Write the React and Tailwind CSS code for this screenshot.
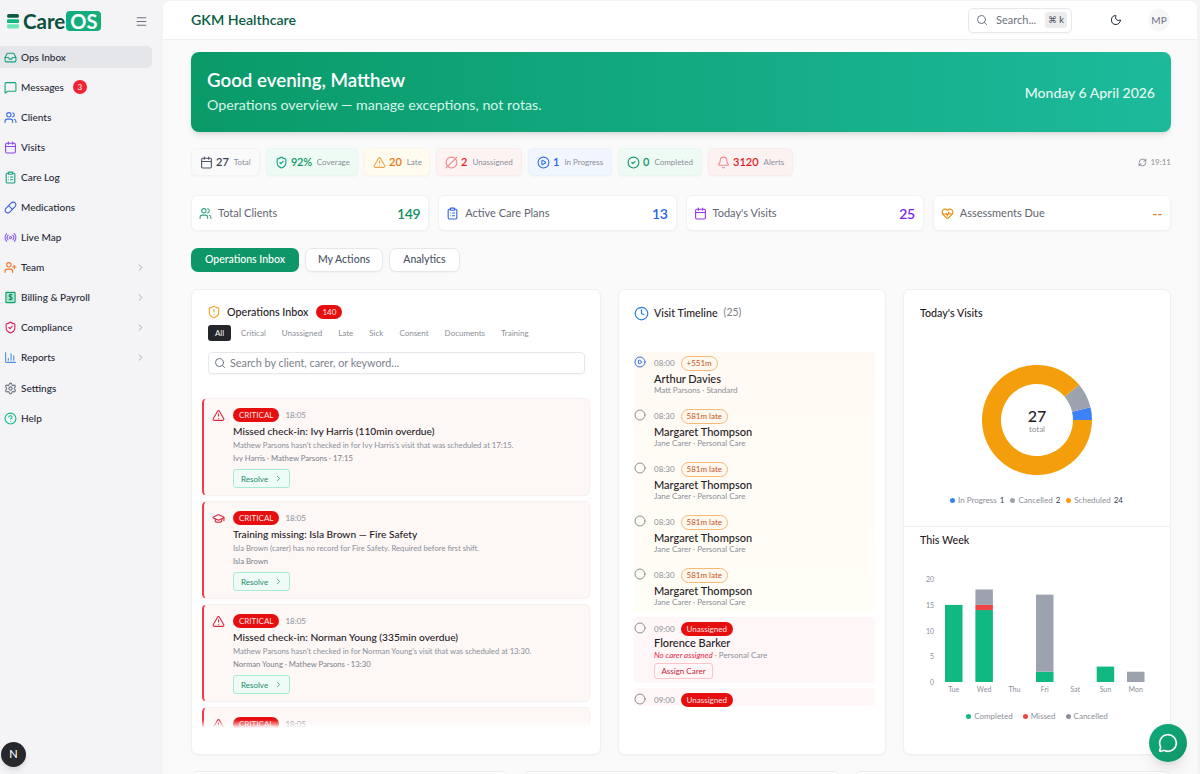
import {
  Bell, Calendar, ChartColumn, ChevronRight, Circle, CircleCheck, CircleHelp, CirclePlay, CircleSlash2, Clock,
  ClipboardList, GraduationCap, HeartPulse, Inbox, Menu, MessageCircle, MessageSquare, Moon, Pill, Radio,
  RefreshCw, Search, Settings, ShieldAlert, ShieldCheck, TriangleAlert, UserPlus, Users,
} from 'lucide-react';

const BillingIcon = ({ className }) => (
  <svg viewBox="0 0 24 24" className={className} fill="none">
    <rect x="3.5" y="2.5" width="17" height="19" rx="1" fill="#a7e3cd" stroke="currentColor" strokeWidth="2" />
    <text x="12" y="17" textAnchor="middle" fontSize="14" fontWeight="700" fill="#047857">$</text>
  </svg>
);

const navItems = [
  { label: 'Ops Inbox', icon: Inbox, color: 'text-[#10a37f]', active: true },
  { label: 'Messages', icon: MessageSquare, color: 'text-[#10a37f]', badge: '3' },
  { label: 'Clients', icon: Users, color: 'text-[#3b6fe0]' },
  { label: 'Visits', icon: Calendar, color: 'text-[#8b45e8]' },
  { label: 'Care Log', icon: ClipboardList, color: 'text-[#0f9f7c]' },
  { label: 'Medications', icon: Pill, color: 'text-[#3b5fe0]' },
  { label: 'Live Map', icon: Radio, color: 'text-[#8b5cf6]' },
  { label: 'Team', icon: UserPlus, color: 'text-[#f0762b]', arrow: true },
  { label: 'Billing & Payroll', icon: BillingIcon, color: 'text-[#0f9f6e]', arrow: true },
  { label: 'Compliance', icon: ShieldCheck, color: 'text-[#e11d58]', arrow: true },
  { label: 'Reports', icon: ChartColumn, color: 'text-[#4a90d9]', arrow: true },
  { label: 'Settings', icon: Settings, color: 'text-[#6b7280]' },
  { label: 'Help', icon: CircleHelp, color: 'text-[#10b98a]' },
];

const chips = [
  { icon: Calendar, value: '27', label: 'Total', box: 'bg-[#fafafb] border-[#f3f3f5] w-[69px]', iconColor: 'text-[#4b5563]', valueColor: 'text-[#374151]' },
  { icon: ShieldCheck, value: '92%', label: 'Coverage', box: 'bg-[#eefbf5] border-[#e8f8f0] w-[92px]', iconColor: 'text-[#0f9f7c]', valueColor: 'text-[#0f9668] tracking-tight' },
  { icon: TriangleAlert, value: '20', label: 'Late', box: 'bg-[#fffbee] border-[#fcf6e4] w-[66px]', iconColor: 'text-[#eda54a]', valueColor: 'text-[#e4780e]' },
  { icon: CircleSlash2, value: '2', label: 'Unassigned', box: 'bg-[#fef3f3] border-[#fbecec] w-[86px]', iconColor: 'text-[#ef8a8a]', valueColor: 'text-[#e11d1d]' },
  { icon: CirclePlay, value: '1', label: 'In Progress', box: 'bg-[#f1f6fe] border-[#ecf2fc] w-[84px]', iconColor: 'text-[#2f6fe8]', valueColor: 'text-[#2563eb]' },
  { icon: CircleCheck, value: '0', label: 'Completed', box: 'bg-[#eefbf5] border-[#e8f8f0] w-[84px]', iconColor: 'text-[#0f9668]', valueColor: 'text-[#0f9668]' },
  { icon: Bell, value: '3120', label: 'Alerts', box: 'bg-[#fdf2f2] border-[#faecec] w-[85px]', iconColor: 'text-[#f08a94]', valueColor: 'text-[#dc1c1c]' },
];

const stats = [
  { icon: Users, label: 'Total Clients', value: '149', iconColor: 'text-[#34a583]', valueColor: 'text-[#0f8f63]' },
  { icon: ClipboardList, label: 'Active Care Plans', value: '13', iconColor: 'text-[#2f62e0]', valueColor: 'text-[#2563eb]' },
  { icon: Calendar, label: "Today's Visits", value: '25', iconColor: 'text-[#9333ea]', valueColor: 'text-[#7c22ee]' },
  { icon: HeartPulse, label: 'Assessments Due', value: '--', iconColor: 'text-[#e8890c]', valueColor: 'text-[#d97f26]' },
];

const filters = ['Critical', 'Unassigned', 'Late', 'Sick', 'Consent', 'Documents', 'Training'];

const inboxItems = [
  { icon: TriangleAlert, title: 'Missed check-in: Ivy Harris (110min overdue)', body: "Mathew Parsons hasn't checked in for Ivy Harris's visit that was scheduled at 17:15.", meta: 'Ivy Harris · Mathew Parsons · 17:15' },
  { icon: GraduationCap, title: 'Training missing: Isla Brown — Fire Safety', body: 'Isla Brown (carer) has no record for Fire Safety. Required before first shift.', meta: 'Isla Brown' },
  { icon: TriangleAlert, title: 'Missed check-in: Norman Young (335min overdue)', body: "Mathew Parsons hasn't checked in for Norman Young's visit that was scheduled at 13:30.", meta: 'Norman Young · Mathew Parsons · 13:30' },
  { icon: TriangleAlert },
];

const lateVisits = [
  { time: '08:30', tag: '581m late', name: 'Margaret Thompson', sub: 'Jane Carer · Personal Care' },
  { time: '08:30', tag: '581m late', name: 'Margaret Thompson', sub: 'Jane Carer · Personal Care' },
  { time: '08:30', tag: '581m late', name: 'Margaret Thompson', sub: 'Jane Carer · Personal Care' },
  { time: '08:30', tag: '581m late', name: 'Margaret Thompson', sub: 'Jane Carer · Personal Care' },
];

const polar = (r, deg) => {
  const rad = (deg * Math.PI) / 180;
  return [r * Math.cos(rad), -r * Math.sin(rad)];
};

const donutSlice = (from, to) => {
  const [ax, ay] = polar(55, from);
  const [bx, by] = polar(55, to);
  const [cx, cy] = polar(36, to);
  const [dx, dy] = polar(36, from);
  const large = to - from > 180 ? 1 : 0;
  return `M${ax} ${ay}A55 55 0 ${large} 0 ${bx} ${by}L${cx} ${cy}A36 36 0 ${large} 1 ${dx} ${dy}Z`;
};

const weekBars = [
  { day: 'Tue', x: 41, parts: [[15, '#10b981']] },
  { day: 'Wed', x: 71.4, parts: [[14, '#10b981'], [1, '#ef4444'], [3, '#9ca3af']] },
  { day: 'Thu', x: 101.7, parts: [] },
  { day: 'Fri', x: 132, parts: [[2, '#10b981'], [15, '#9ca3af']] },
  { day: 'Sat', x: 162.4, parts: [] },
  { day: 'Sun', x: 192.7, parts: [[3, '#10b981']] },
  { day: 'Mon', x: 223, parts: [[2, '#9ca3af']] },
];

const WeekChart = () => (
  <svg viewBox="0 0 268 130" className="h-[130px] w-[268px]">
    {[0, 5, 10, 15, 20].map(v => (
      <text key={v} x="30" y={110 - v * 5.14 + 3} textAnchor="end" fontSize="7" fill="#8b8f97">{v}</text>
    ))}
    {weekBars.map(bar => {
      let base = 110;
      return (
        <g key={bar.day}>
          {bar.parts.map(([count, color]) => {
            const h = count * 5.14;
            base -= h;
            return <rect key={color} x={bar.x} y={base} width="17.5" height={h} fill={color} />;
          })}
          <text x={bar.x + 8.7} y="120" textAnchor="middle" fontSize="7" fill="#8b8f97">{bar.day}</text>
        </g>
      );
    })}
  </svg>
);

const Sidebar = () => (
  <aside className="flex w-[163px] shrink-0 flex-col">
    <div className="flex h-[42px] shrink-0 items-center pl-[7px] pr-[15px]">
      <svg viewBox="0 0 14 16" className="h-[15px] w-[13px]">
        <path d="M2 0h9a1.5 1.5 0 0 1 0 4H2a1.5 1.5 0 0 1 0-4Z" fill="#0b5c45" />
        <rect x="0" y="5.5" width="13" height="4" rx="1" fill="#10b981" />
        <rect x="0" y="11" width="13" height="4.5" rx="1.5" fill="#6ee7b7" />
      </svg>
      <span className="ml-[3px] text-[20.5px] font-bold leading-none text-[#0b4f3c]">Care</span>
      <span className="ml-[1px] rounded-[4px] bg-[#13ac7d] px-[4px] py-[1px] text-[20px] font-bold leading-[18px] text-white">OS</span>
      <Menu className="ml-auto h-[13px] w-[13px] text-[#6b7280]" />
    </div>
    <nav className="mt-[4px] flex flex-col gap-[8px]">
      {navItems.map(item => (
        <div
          key={item.label}
          className={`flex h-[22.1px] w-[152px] items-center rounded-r-[5px] pl-[4px] pr-[6px] ${item.active ? 'bg-[#e5e6e9]' : ''}`}
        >
          <item.icon className={`h-[13px] w-[13px] shrink-0 ${item.color}`} />
          <span className="ml-[4px] text-[10px] font-medium text-[#1f2937]">{item.label}</span>
          {item.badge && (
            <span className="ml-[9px] flex h-[14px] w-[14px] items-center justify-center rounded-full bg-[#ef2433] text-[8px] text-white">{item.badge}</span>
          )}
          {item.arrow && <ChevronRight className="ml-auto h-[11px] w-[11px] text-[#9ca3af]" />}
        </div>
      ))}
    </nav>
  </aside>
);

const TopBar = () => (
  <header className="flex h-[39px] shrink-0 items-center rounded-t-[8px] border-b border-[#f0f0f2] bg-white pl-[28px] pr-[27px]">
    <h1 className="text-[14.2px] font-semibold text-[#0b5c45]">GKM Healthcare</h1>
    <div className="ml-auto flex h-[25px] w-[104px] items-center rounded-[5px] border border-[#e5e7eb] pl-[7px] pr-[4px] shadow-[0_1px_2px_rgba(0,0,0,0.04)]">
      <Search className="h-[12px] w-[12px] text-[#6b7280]" />
      <span className="ml-[8px] text-[11px] text-[#6b7280]">Search...</span>
      <span className="ml-auto rounded-[3px] bg-[#ececee] px-[3px] py-[1px] text-[9px] font-medium text-[#4b5563]">⌘ k</span>
    </div>
    <Moon className="ml-[38px] h-[12px] w-[12px] text-[#1f2937]" />
    <span className="ml-[26px] flex h-[22px] w-[22px] items-center justify-center rounded-full bg-[#f7f7f8] text-[10px] text-[#6b7280]">MP</span>
  </header>
);

const Banner = () => (
  <section className="flex h-[80px] shrink-0 items-center justify-between rounded-[8px] bg-gradient-to-r from-[#0a9a68] to-[#1cba9c] pl-[16px] pr-[16px] shadow-md">
    <div className="pb-[2px]">
      <h2 className="text-[18.7px] font-semibold leading-[26px] text-white">Good evening, Matthew</h2>
      <p className="mt-[2px] text-[14.25px] leading-[20px] text-[#d5f5e8]">Operations overview — manage exceptions, not rotas.</p>
    </div>
    <span className="text-[14px] font-medium text-[#e6f9f1]">Monday 6 April 2026</span>
  </section>
);

const ChipRow = () => (
  <section className="mt-[16px] flex h-[28px] shrink-0 items-center gap-[6px]">
    {chips.map(chip => (
      <div key={chip.label} className={`flex h-[28px] items-center rounded-[5px] border pl-[8px] shadow-[0_1px_2px_rgba(0,0,0,0.03)] ${chip.box}`}>
        <chip.icon className={`h-[13px] w-[13px] shrink-0 ${chip.iconColor}`} />
        <span className={`ml-[3px] text-[11px] font-semibold ${chip.valueColor}`}>{chip.value}</span>
        <span className="ml-[5px] whitespace-nowrap text-[8px] text-[#8b8f97]">{chip.label}</span>
      </div>
    ))}
    <div className="ml-auto flex items-center gap-[3px] text-[8px] text-[#8b8f97]">
      <RefreshCw className="h-[9px] w-[9px] text-[#6b7280]" />
      19:11
    </div>
  </section>
);

const StatRow = () => (
  <section className="mt-[19px] grid h-[36px] shrink-0 grid-cols-4 gap-[9px]">
    {stats.map(stat => (
      <div key={stat.label} className="flex items-center rounded-[6px] border border-[#f2f2f4] bg-white pl-[7px] pr-[8px] shadow-[0_1px_2px_rgba(0,0,0,0.03)]">
        <stat.icon className={`h-[13px] w-[13px] ${stat.iconColor}`} />
        <span className="ml-[6px] text-[11px] text-[#5f6570]">{stat.label}</span>
        <span className={`ml-auto text-[14px] font-semibold tracking-tight ${stat.valueColor}`}>{stat.value}</span>
      </div>
    ))}
  </section>
);

const Tabs = () => (
  <section className="mt-[17px] flex h-[24px] shrink-0 gap-[6px]">
    <button className="w-[108px] rounded-[7px] bg-[#0f9668] text-[10.5px] font-medium text-white">Operations Inbox</button>
    <button className="w-[78px] rounded-[7px] border border-[#e5e7eb] bg-white text-[10.5px] font-medium text-[#4b5563] shadow-[0_1px_2px_rgba(0,0,0,0.04)]">My Actions</button>
    <button className="w-[71px] rounded-[7px] border border-[#e5e7eb] bg-white text-[10.5px] font-medium text-[#4b5563] shadow-[0_1px_2px_rgba(0,0,0,0.04)]">Analytics</button>
  </section>
);

const InboxCard = ({ item }) => (
  <article className="flex h-[98px] shrink-0 rounded-[5px] border border-[#f7f0f0] border-l-2 border-l-[#ef3b4a] bg-[#fdf7f6] pl-[8px] pt-[9px]">
    <item.icon className="mt-[1px] h-[13px] w-[13px] shrink-0 text-[#d5283c]" />
    <div className="ml-[8px]">
      <div className="flex items-center">
        <span className="rounded-full bg-[#e60f0f] px-[6px] text-[8px] leading-[14px] text-[#ffe3e3]">CRITICAL</span>
        <span className="ml-[6px] text-[8px] text-[#8b8f97]">18:05</span>
      </div>
      {item.title && (
        <>
          <h4 className="mt-[2px] text-[10.2px] font-medium leading-[15px] text-[#1f2024]">{item.title}</h4>
          <p className="text-[7.7px] leading-[12px] text-[#8b8f97]">{item.body}</p>
          <p className="mt-[1px] text-[7.7px] leading-[12px] text-[#7c8089]">{item.meta}</p>
          <button className="mt-[5px] flex h-[19px] w-[57px] items-center justify-between rounded-[3px] border border-[#a8ead2] bg-[#eefbf6] pl-[7px] pr-[6px] text-[8px] text-[#26896a]">
            Resolve
            <ChevronRight className="h-[9px] w-[9px]" />
          </button>
        </>
      )}
    </div>
  </article>
);

const OperationsInbox = () => (
  <div className="flex min-h-0 flex-col overflow-hidden rounded-[7px] border border-[#f0f0f2] bg-white pb-[26px] pl-[10px] pr-[10px] shadow-[0_1px_2px_rgba(0,0,0,0.03)]">
    <div className="mt-[14px] flex items-center pl-[5px]">
      <ShieldAlert className="h-[14px] w-[14px] text-[#f0a92c]" />
      <h3 className="ml-[6px] text-[10.7px] font-medium text-[#1f2024]">Operations Inbox</h3>
      <span className="ml-[8px] rounded-full bg-[#e60f0f] px-[6px] text-[8px] leading-[14px] text-[#ffe3e3]">140</span>
    </div>
    <div className="mt-[5px] flex h-[16px] items-center pl-[6px] text-[8px] text-[#8b8f97]">
      <span className="mr-[10px] flex h-[16px] w-[23px] items-center justify-center rounded-[3px] bg-[#24262b] text-white">All</span>
      <div className="flex gap-[16px]">
        {filters.map(f => <span key={f}>{f}</span>)}
      </div>
    </div>
    <div className="ml-[6px] mr-[5px] mt-[11px] flex h-[22px] shrink-0 items-center rounded-[4px] border border-[#e5e7eb] pl-[5px] shadow-[0_1px_2px_rgba(0,0,0,0.04)]">
      <Search className="h-[12px] w-[12px] text-[#6b7280]" />
      <span className="ml-[4px] text-[10.8px] text-[#7c8089]">Search by client, carer, or keyword...</span>
    </div>
    <div className="relative mt-[24px] flex min-h-0 flex-1 flex-col gap-[5px] overflow-hidden">
      {inboxItems.map((item, i) => <InboxCard key={i} item={item} />)}
      <div className="absolute inset-x-0 bottom-0 h-[8px] bg-gradient-to-t from-white to-transparent" />
    </div>
  </div>
);

const TimelineRow = ({ icon: Icon, iconColor, time, tag, name, sub }) => (
  <div className="flex h-[53px] shrink-0">
    <Icon className={`h-[12px] w-[12px] shrink-0 ${iconColor}`} />
    <div className="ml-[8px] flex-1">
      <div className="flex h-[14px] items-center">
        <span className="text-[8px] text-[#8b8f97]">{time}</span>
        <span className="ml-[6px] rounded-full border border-[#f3b978] bg-[#fff8ee] px-[5px] text-[8px] leading-[13px] text-[#c2541a]">{tag}</span>
      </div>
      <div className="mt-[2px] text-[11px] font-medium leading-[14px] text-[#1f2024]">{name}</div>
      <div className="-mt-[1px] text-[8px] leading-[11px] text-[#8b8f97]">{sub}</div>
    </div>
  </div>
);

const VisitTimeline = () => (
  <div className="flex min-h-0 flex-col overflow-hidden rounded-[7px] border border-[#f0f0f2] bg-white pb-[47px] pl-[15px] pr-[10px] shadow-[0_1px_2px_rgba(0,0,0,0.03)]">
    <div className="mt-[15px] flex h-[16px] items-center">
      <Clock className="h-[15px] w-[15px] text-[#2f80e8]" />
      <h3 className="ml-[5px] text-[10.7px] font-medium text-[#1f2024]">Visit Timeline</h3>
      <span className="ml-[6px] text-[10.5px] text-[#7c8089]">(25)</span>
    </div>
    <div className="mt-[31px] flex min-h-0 flex-1 flex-col overflow-hidden">
      <div className="h-[260px] shrink-0 overflow-hidden bg-gradient-to-b from-[#fff9f4] to-[#fffef6] pt-[4px]">
        <TimelineRow icon={CirclePlay} iconColor="text-[#2f6fe8]" time="08:00" tag="+551m" name="Arthur Davies" sub="Matt Parsons · Standard" />
        {lateVisits.map((v, i) => <TimelineRow key={i} icon={Circle} iconColor="text-[#8b8f97]" {...v} />)}
      </div>
      <div className="mt-[5px] h-[66px] shrink-0 rounded-[3px] bg-[#fef6f7] pt-[5px]">
        <div className="flex">
          <Circle className="h-[12px] w-[12px] shrink-0 text-[#8b8f97]" />
          <div className="ml-[8px]">
            <div className="flex h-[14px] items-center">
              <span className="text-[8px] text-[#8b8f97]">09:00</span>
              <span className="ml-[6px] rounded-full bg-[#e60f0f] px-[6px] text-[8px] leading-[14px] text-[#ffe3e3]">Unassigned</span>
            </div>
            <div className="text-[11px] font-medium leading-[14px] text-[#1f2024]">Florence Barker</div>
            <div className="text-[8px] leading-[11px] text-[#8b8f97]"><em className="text-[#e5264a]">No carer assigned</em> · Personal Care</div>
            <button className="mt-[2px] block h-[16px] w-[59px] rounded-[3px] border border-[#f8c5cb] text-[8px] text-[#c81e3a]">Assign Carer</button>
          </div>
        </div>
      </div>
      <div className="mt-[5px] flex h-[18px] shrink-0 rounded-[3px] bg-[#fef6f7] pt-[5px]">
        <Circle className="h-[12px] w-[12px] shrink-0 text-[#8b8f97]" />
        <div className="ml-[8px] flex h-[14px] items-center">
          <span className="text-[8px] text-[#8b8f97]">09:00</span>
          <span className="ml-[6px] rounded-full bg-[#e60f0f] px-[6px] text-[8px] leading-[14px] text-[#ffe3e3]">Unassigned</span>
        </div>
      </div>
    </div>
  </div>
);

const LegendDot = ({ color, label, value }) => (
  <span className="flex items-center gap-[3px]">
    <span className={`h-[5px] w-[5px] rounded-full ${color}`} />
    <span className="text-[#8b8f97]">{label}</span>
    {value && <span className="text-[#374151]">{value}</span>}
  </span>
);

const ChartsColumn = () => (
  <div className="flex min-h-0 flex-col overflow-hidden rounded-[7px] border border-[#f0f0f2] bg-white shadow-[0_1px_2px_rgba(0,0,0,0.03)]">
    <div className="h-[237px] shrink-0 border-b border-[#f0f0f2] pl-[16px] pt-[15px]">
      <h3 className="text-[10.7px] font-medium leading-[16px] text-[#1f2024]">Today's Visits</h3>
      <div className="relative ml-[62px] mt-[44px] h-[110px] w-[110px]">
        <svg viewBox="-55 -55 110 110" className="h-[110px] w-[110px]">
          <path d={donutSlice(0, 13.3)} fill="#3b82f6" />
          <path d={donutSlice(13.3, 40)} fill="#9ca3af" />
          <path d={donutSlice(40, 360)} fill="#f59e0b" />
        </svg>
        <div className="absolute inset-0 flex flex-col items-center justify-center">
          <span className="text-[16px] font-medium leading-[17px] text-[#1f2024]">27</span>
          <span className="text-[8px] leading-[10px] text-[#8b8f97]">total</span>
        </div>
      </div>
      <div className="ml-[30px] mt-[19px] flex gap-[6px] text-[8px]">
        <LegendDot color="bg-[#3b82f6]" label="In Progress" value="1" />
        <LegendDot color="bg-[#9ca3af]" label="Cancelled" value="2" />
        <LegendDot color="bg-[#f59e0b]" label="Scheduled" value="24" />
      </div>
    </div>
    <div className="flex-1">
      <h3 className="ml-[16px] mt-[5px] text-[10.7px] font-medium leading-[16px] text-[#1f2024]">This Week</h3>
      <div className="mt-[24px]"><WeekChart /></div>
      <div className="mt-[8px] flex justify-center gap-[10px] text-[8px]">
        <LegendDot color="bg-[#10b981]" label="Completed" />
        <LegendDot color="bg-[#ef4444]" label="Missed" />
        <LegendDot color="bg-[#8b8f97]" label="Cancelled" />
      </div>
    </div>
  </div>
);

export default function App() {
  return (
    <div className="relative flex h-screen overflow-hidden bg-[#f4f4f6] font-['Lato',sans-serif]">
      <Sidebar />
      <main className="mr-[3px] mt-[1px] flex min-w-0 flex-1 flex-col rounded-t-[8px] bg-[#fafafa]">
        <TopBar />
        <div className="flex min-h-0 flex-1 flex-col pl-[28px] pr-[26px] pt-[12px]">
          <Banner />
          <ChipRow />
          <StatRow />
          <Tabs />
          <section className="mt-[17px] grid h-[466px] shrink-0 grid-cols-[410px_268px_268px] gap-x-[17px]">
            <OperationsInbox />
            <VisitTimeline />
            <ChartsColumn />
          </section>
          <section className="mt-[16px] grid h-[40px] shrink-0 grid-cols-3 gap-[14px]">
            <div className="rounded-[7px] border border-[#ececee] bg-white" />
            <div className="rounded-[7px] border border-[#ececee] bg-white" />
            <div className="rounded-[7px] border border-[#ececee] bg-white" />
          </section>
        </div>
      </main>
      <div className="absolute bottom-[7px] left-[1px] flex h-[25px] w-[25px] items-center justify-center rounded-full bg-[#26282c] text-[11px] font-medium text-white shadow-md">N</div>
      <button className="absolute bottom-[12px] right-[13px] flex h-[38px] w-[38px] items-center justify-center rounded-full bg-gradient-to-br from-[#10a97c] to-[#0f9668] text-white shadow-lg">
        <MessageCircle className="h-[20px] w-[20px]" />
      </button>
    </div>
  );
}
